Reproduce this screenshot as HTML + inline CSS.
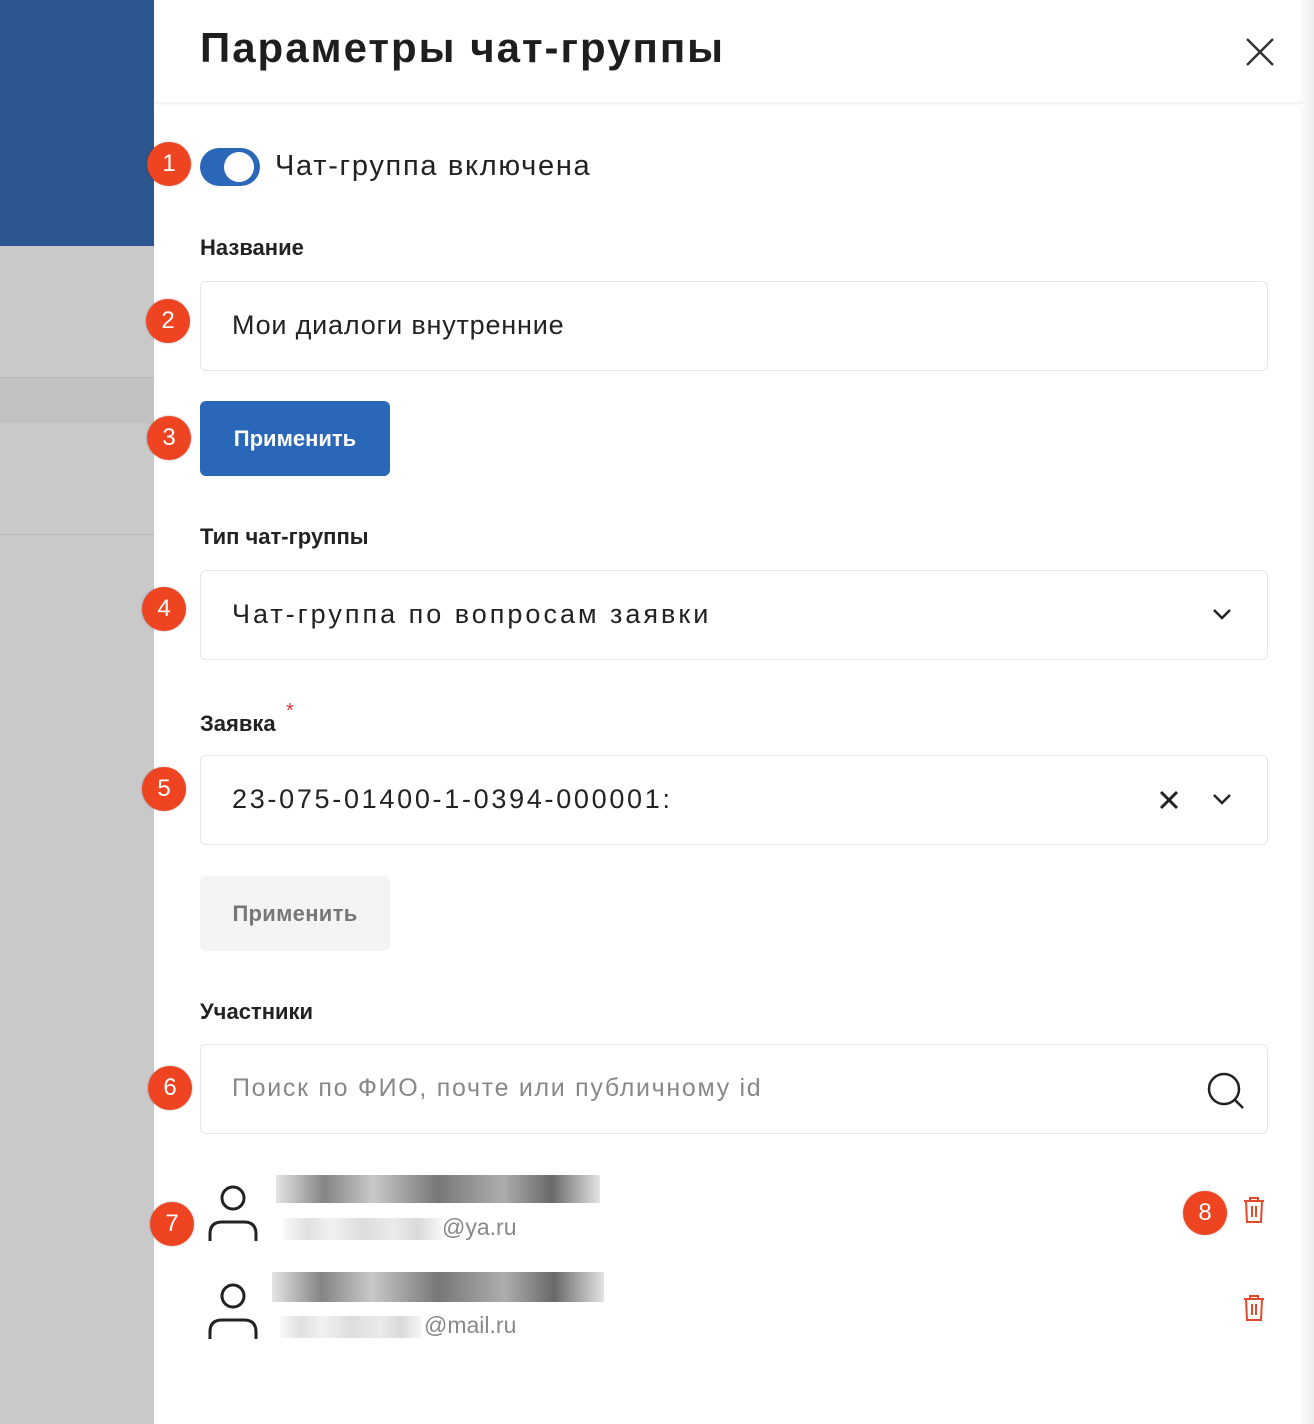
<!DOCTYPE html>
<html><head><meta charset="utf-8"><style>
*{margin:0;padding:0;box-sizing:border-box}
body{width:1314px;height:1424px;position:relative;overflow:hidden;background:#fff;font-family:"Liberation Sans","DejaVu Sans",sans-serif;color:#222}
.a{position:absolute}
.badge{position:absolute;width:44px;height:44px;border-radius:50%;background:#ee4422;color:#fff;font-size:24px;text-align:center;line-height:44px;box-shadow:0 0 2px rgba(0,0,0,.3)}
.lbl{position:absolute;left:200px;font-weight:bold;font-size:22px;color:#222}
.box{position:absolute;left:200px;width:1068px;height:90px;border:1.5px solid #e6e6ea;border-radius:6px;background:#fff}
.box span{position:absolute;left:31px;top:28px;font-size:27px;color:#222;white-space:nowrap}
.blur{position:absolute;background:linear-gradient(90deg,#ddd,#666 15%,#bbb 30%,#555 50%,#999 70%,#444 85%,#ddd)}
</style></head><body>
<div class="a" style="left:0;top:0;width:154px;height:246px;background:#2b568f"></div>
<div class="a" style="left:0;top:246px;width:154px;height:1178px;background:#c9c9c9"></div>
<div class="a" style="left:0;top:377px;width:154px;height:46px;background:#c2c2c2;border-top:1px solid #b8b8b8"></div>
<div class="a" style="left:0;top:534px;width:154px;height:1px;background:#b8b8b8"></div>
<div class="a" style="left:1298px;top:0;width:16px;height:1424px;background:linear-gradient(90deg,#fff,#ececec)"></div>
<div class="a" style="left:154px;top:102px;width:1150px;height:4px;background:linear-gradient(#eee,#fff)"></div>
<div class="a" style="left:200px;top:24px;font-size:42px;font-weight:bold;color:#1e1e1e;letter-spacing:2px;white-space:nowrap">Параметры чат-группы</div>
<svg class="a" style="left:1244px;top:36px" width="32" height="32"><path d="M3 3L29 29M29 3L3 29" stroke="#333" stroke-width="2.5"/></svg>

<div class="badge" style="left:147px;top:142px">1</div>
<div class="a" style="left:200px;top:148px;width:60px;height:38px;border-radius:19px;background:#2b67b8"></div>
<div class="a" style="left:224px;top:152px;width:30px;height:30px;border-radius:50%;background:#fff"></div>
<div class="a" style="left:275px;top:150px;font-size:29px;color:#222;letter-spacing:1.7px;white-space:nowrap">Чат-группа включена</div>

<div class="lbl" style="top:235px">Название</div>
<div class="badge" style="left:146px;top:299px">2</div>
<div class="box" style="top:281px"><span style="letter-spacing:0.8px">Мои диалоги внутренние</span></div>

<div class="badge" style="left:147px;top:416px">3</div>
<div class="a" style="left:200px;top:401px;width:190px;height:75px;border-radius:6px;background:#2b67b8;color:#fff;font-weight:bold;font-size:22px;line-height:75px;text-align:center">Применить</div>

<div class="lbl" style="top:524px">Тип чат-группы</div>
<div class="badge" style="left:142px;top:587px">4</div>
<div class="box" style="top:570px"><span style="letter-spacing:3px">Чат-группа по вопросам заявки</span>
<svg class="a" style="left:1010px;top:36px" width="22" height="14"><path d="M3 3L11 11L19 3" stroke="#222" stroke-width="2.5" fill="none"/></svg></div>

<div class="lbl" style="top:711px">Заявка</div>
<div class="a" style="left:286px;top:700px;color:#e33;font-size:20px">*</div>
<div class="badge" style="left:142px;top:767px">5</div>
<div class="box" style="top:755px"><span style="letter-spacing:2.7px">23-075-01400-1-0394-000001:</span>
<svg class="a" style="left:958px;top:34px" width="20" height="20"><path d="M2 2L18 18M18 2L2 18" stroke="#222" stroke-width="3"/></svg>
<svg class="a" style="left:1010px;top:36px" width="22" height="14"><path d="M3 3L11 11L19 3" stroke="#222" stroke-width="2.5" fill="none"/></svg></div>

<div class="a" style="left:200px;top:876px;width:190px;height:75px;border-radius:6px;background:#f4f4f4;color:#777;font-weight:bold;font-size:22px;line-height:75px;text-align:center;letter-spacing:0.3px">Применить</div>

<div class="lbl" style="top:999px">Участники</div>
<div class="badge" style="left:148px;top:1066px">6</div>
<div class="box" style="top:1044px"><span style="color:#888;font-size:25px;top:29px;letter-spacing:1.7px">Поиск по ФИО, почте или публичному id</span>
<svg class="a" style="left:1005px;top:26px" width="40" height="40"><circle cx="18" cy="18" r="15" stroke="#222" stroke-width="2.5" fill="none"/><path d="M29 29L37 37" stroke="#222" stroke-width="2.5"/></svg></div>

<div class="badge" style="left:150px;top:1202px">7</div>
<svg class="a" style="left:206px;top:1184px" width="54" height="60"><circle cx="27" cy="14" r="11" stroke="#222" stroke-width="3" fill="none"/><path d="M4 57V50Q4 38 16 38H38Q50 38 50 50V57" stroke="#222" stroke-width="3" fill="none"/></svg>
<div class="blur" style="left:276px;top:1175px;width:324px;height:28px;opacity:.8"></div>
<div class="blur" style="left:284px;top:1218px;width:158px;height:22px;opacity:.2"></div>
<div class="a" style="left:442px;top:1214px;font-size:23px;color:#888">@ya.ru</div>
<div class="badge" style="left:1183px;top:1191px">8</div>
<svg class="a" style="left:1242px;top:1196px" width="24" height="28"><path d="M2 5H22M8 5V2H16V5M4 5L5 26H19L20 5M10 10V21M14 10V21" stroke="#e34a2a" stroke-width="2" fill="none"/></svg>

<svg class="a" style="left:206px;top:1282px" width="54" height="60"><circle cx="27" cy="14" r="11" stroke="#222" stroke-width="3" fill="none"/><path d="M4 57V50Q4 38 16 38H38Q50 38 50 50V57" stroke="#222" stroke-width="3" fill="none"/></svg>
<div class="blur" style="left:272px;top:1272px;width:332px;height:30px;opacity:.8"></div>
<div class="blur" style="left:280px;top:1316px;width:142px;height:22px;opacity:.2"></div>
<div class="a" style="left:424px;top:1312px;font-size:23px;color:#888">@mail.ru</div>
<svg class="a" style="left:1242px;top:1294px" width="24" height="28"><path d="M2 5H22M8 5V2H16V5M4 5L5 26H19L20 5M10 10V21M14 10V21" stroke="#e34a2a" stroke-width="2" fill="none"/></svg>
</body></html>
